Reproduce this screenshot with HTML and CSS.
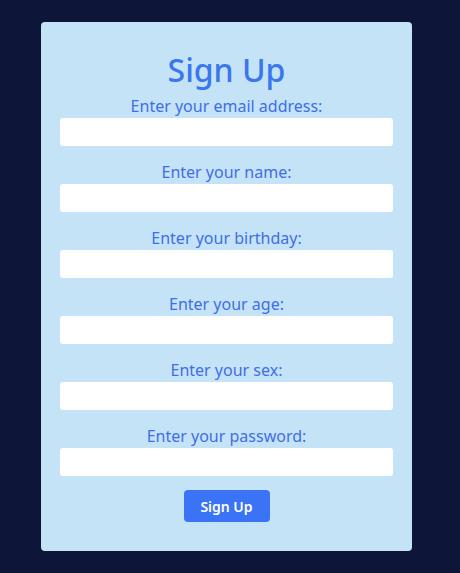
FILE: index.html
```html
<!DOCTYPE html>
<html lang="en">
<head>
    <meta charset="UTF-8">
    <meta name="viewport" content="width=device-width, initial-scale=1.0">
    <title>Sign Up</title>
    <link rel="stylesheet" href="styles.css">
</head>
<body>
    <form class="card">
        <h1 class="title">Sign Up</h1>

        <label class="field">
            <span>Enter your email address:</span>
            <input type="email">
        </label>
        <label class="field">
            <span>Enter your name:</span>
            <input type="text">
        </label>
        <label class="field">
            <span>Enter your birthday:</span>
            <input type="text">
        </label>
        <label class="field">
            <span>Enter your age:</span>
            <input type="text">
        </label>
        <label class="field">
            <span>Enter your sex:</span>
            <input type="text">
        </label>
        <label class="field">
            <span>Enter your password:</span>
            <input type="password">
        </label>

        <button type="button" class="btn">Sign Up</button>
    </form>
</body>
</html>
```

FILE: styles.css
```css
body {
    margin: 0;
    min-height: 100vh;
    background-color: #0d1538;
    font-family: "Noto Sans", sans-serif;
    display: flex;
    justify-content: center;
    align-items: flex-start;
}

.card {
    width: 371px;
    margin: 22px 0 0 -7px;
    box-sizing: border-box;
    padding: 24px 19px 29px;
    background: #c5e3f6;
    border-radius: 4px;
    display: flex;
    flex-direction: column;
    align-items: center;
}

.title {
    margin: 0;
    font-size: 32px;
    line-height: 48px;
    font-weight: 500;
    color: #3a76f0;
}

.field {
    width: 100%;
    display: flex;
    flex-direction: column;
    align-items: center;
    margin-bottom: 14px;
}

.field span {
    font-size: 16px;
    line-height: 24px;
    color: #3f6ee6;
}

.field input {
    width: 100%;
    height: 28px;
    box-sizing: border-box;
    border: none;
    border-radius: 3px;
    background: #fff;
    outline: none;
}

.btn {
    width: 86px;
    height: 32px;
    border: none;
    border-radius: 4px;
    background: #3a73f5;
    color: #fff;
    font-family: inherit;
    font-size: 14px;
    font-weight: 600;
    cursor: pointer;
}
```
